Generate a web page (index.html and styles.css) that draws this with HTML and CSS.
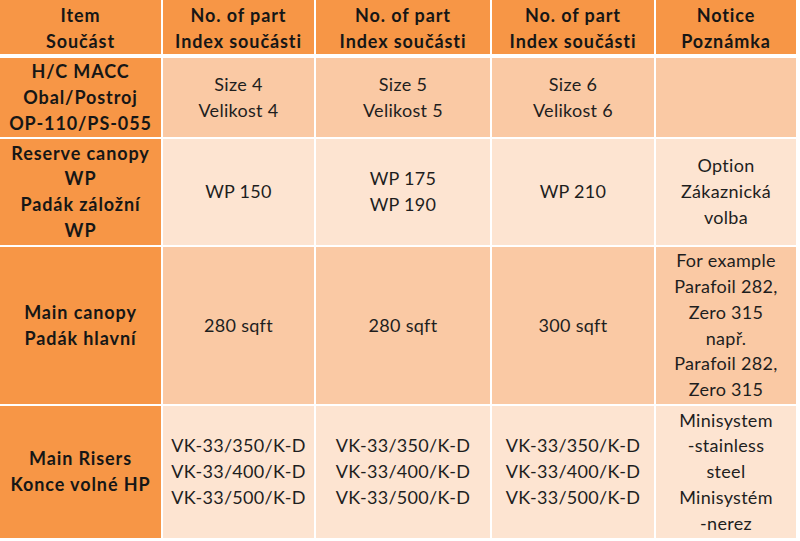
FILE: index.html
```html
<!DOCTYPE html>
<html lang="cs">
<head>
<meta charset="utf-8">
<title>Součásti</title>
<link rel="stylesheet" href="styles.css">
</head>
<body>
<table class="parts">
  <colgroup>
    <col class="c1"><col class="c2"><col class="c3"><col class="c4"><col class="c5">
  </colgroup>
  <thead>
    <tr class="r-head">
      <th>Item<br>Součást</th>
      <th>No. of part<br>Index součásti</th>
      <th>No. of part<br>Index součásti</th>
      <th>No. of part<br>Index součásti</th>
      <th>Notice<br>Poznámka</th>
    </tr>
  </thead>
  <tbody>
    <tr class="r1 band-a">
      <th>H/C MACC<br>Obal/Postroj<br>OP-110/PS-055</th>
      <td>Size 4<br>Velikost 4</td>
      <td>Size 5<br>Velikost 5</td>
      <td>Size 6<br>Velikost 6</td>
      <td></td>
    </tr>
    <tr class="r2 band-b">
      <th>Reserve canopy<br>WP<br>Padák záložní<br>WP</th>
      <td>WP 150</td>
      <td>WP 175<br>WP 190</td>
      <td>WP 210</td>
      <td>Option<br>Zákaznická<br>volba</td>
    </tr>
    <tr class="r3 band-a">
      <th>Main canopy<br>Padák hlavní</th>
      <td>280 sqft</td>
      <td>280 sqft</td>
      <td>300 sqft</td>
      <td>For example<br>Parafoil 282,<br>Zero 315<br>např.<br>Parafoil 282,<br>Zero 315</td>
    </tr>
    <tr class="r4 band-b">
      <th>Main Risers<br>Konce volné HP</th>
      <td>VK-33/350/K-D<br>VK-33/400/K-D<br>VK-33/500/K-D</td>
      <td>VK-33/350/K-D<br>VK-33/400/K-D<br>VK-33/500/K-D</td>
      <td>VK-33/350/K-D<br>VK-33/400/K-D<br>VK-33/500/K-D</td>
      <td>Minisystem<br>-stainless<br>steel<br>Minisystém<br>-nerez</td>
    </tr>
  </tbody>
</table>
</body>
</html>
```

FILE: styles.css
```css
html, body {
  margin: 0;
  padding: 0;
  background: #ffffff;
}

.parts {
  border-collapse: separate;
  border-spacing: 0;
  table-layout: fixed;
  width: 796px;
  font-family: Lato, "Open Sans", sans-serif;
  font-size: 18px;
  line-height: 25.7px;
  color: #1e1e1e;
}

.c1 { width: 163px; }
.c2 { width: 153px; }
.c3 { width: 176px; }
.c4 { width: 164px; }
.c5 { width: 140px; }

.parts th,
.parts td {
  padding: 1px 2px 0;
  text-align: center;
  vertical-align: middle;
  border-right: 2px solid #ffffff;
  border-bottom: 2px solid #ffffff;
  overflow: hidden;
  white-space: nowrap;
}

.parts td {
  letter-spacing: 0.3px;
}

.parts th:last-child,
.parts td:last-child {
  border-right: 0;
}

.parts th {
  font-weight: 700;
  letter-spacing: 0.9px;
  background: #f79646;
  color: #161616;
}

.r-head th {
  border-bottom-width: 4px;
  padding-top: 3px;
}

.r-head { height: 58px; }
.r1 { height: 80px; }
.r2 { height: 108px; }
.r3 { height: 159px; }
.r4 { height: 132px; }

.r4 th,
.r4 td {
  border-bottom: 0;
}

.band-a td { background: #fac9a4; }
.band-b td { background: #fde4d1; }
```
